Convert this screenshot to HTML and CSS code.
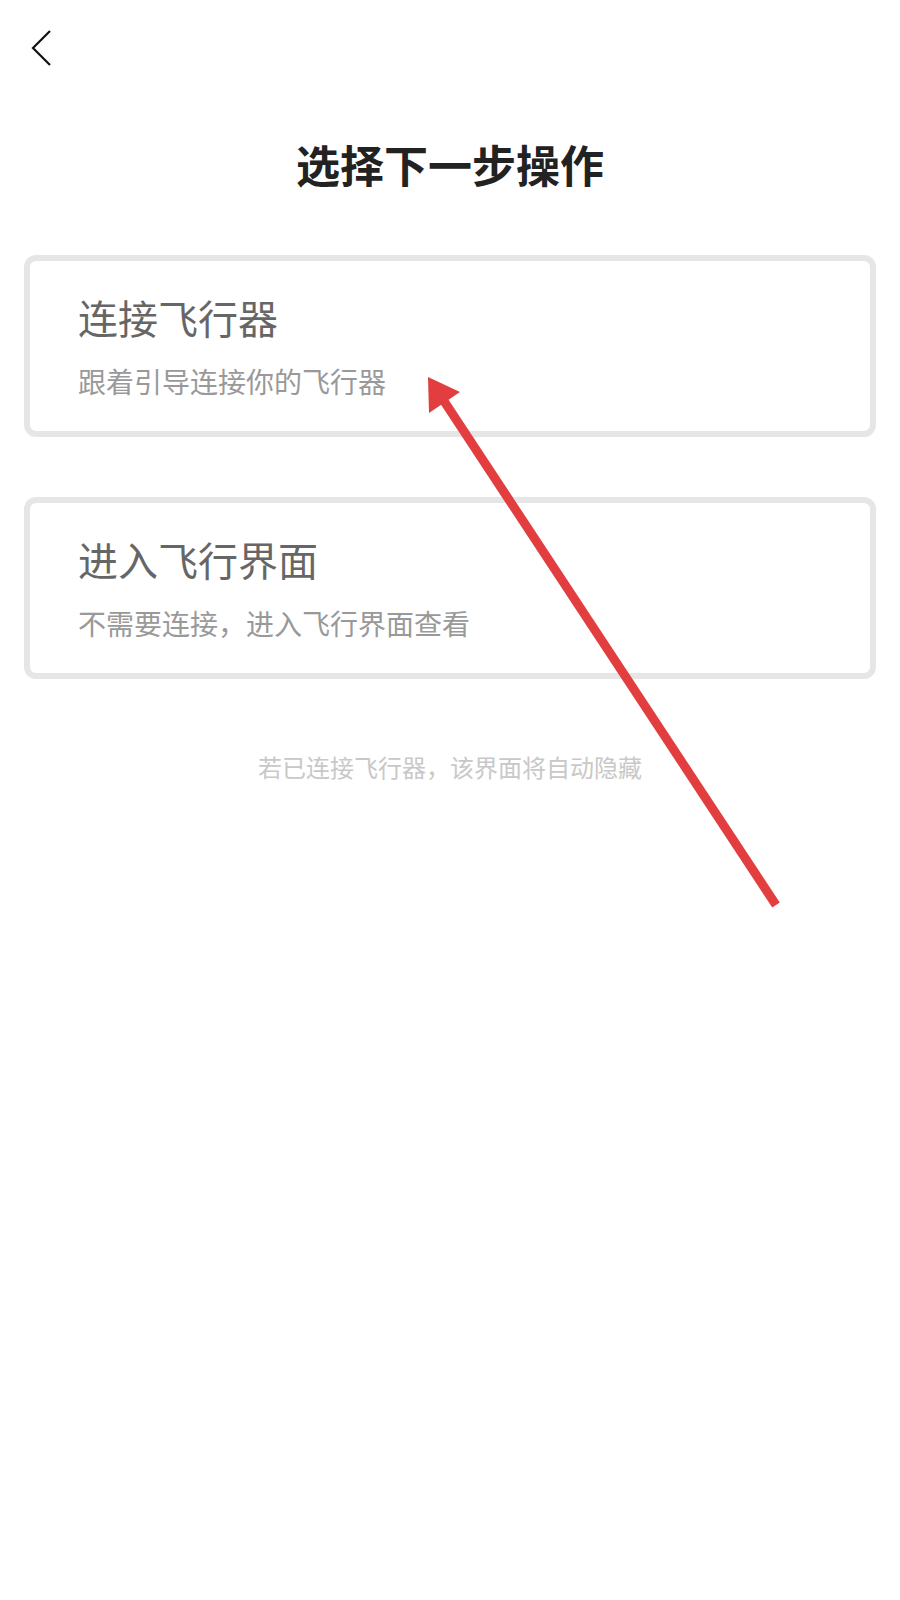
FILE: index.html
```html
<!DOCTYPE html>
<html lang="zh-CN">
<head>
<meta charset="utf-8">
<title>选择下一步操作</title>
<link rel="stylesheet" href="styles.css">
</head>
<body>
<div class="page">
  <div class="topbar">
    <svg class="back" width="24" height="40" viewBox="0 0 24 40" aria-label="返回">
      <polyline points="19,2 2,19 19,36" fill="none" stroke="#111" stroke-width="2.2" stroke-linecap="butt" stroke-linejoin="miter"/>
    </svg>
  </div>
  <h1 class="title">选择下一步操作</h1>
  <div class="cards">
    <div class="card">
      <div class="card-title">连接飞行器</div>
      <div class="card-sub">跟着引导连接你的飞行器</div>
    </div>
    <div class="card">
      <div class="card-title">进入飞行界面</div>
      <div class="card-sub">不需要连接，进入飞行界面查看</div>
    </div>
  </div>
  <p class="hint">若已连接飞行器，该界面将自动隐藏</p>
  <svg class="annotation" width="900" height="1600" viewBox="0 0 900 1600">
    <line x1="442" y1="398" x2="776" y2="905" stroke="#e23e3f" stroke-width="9"/>
    <polygon points="428,377 460,392 429,413" fill="#e23e3f"/>
  </svg>
</div>
</body>
</html>
```
FILE: styles.css
```css
html, body {
  margin: 0;
  padding: 0;
  background: #fff;
}
body {
  font-family: "Noto Sans CJK SC", "Noto Sans", sans-serif;
}
.page {
  position: relative;
  width: 900px;
  min-height: 1600px;
}
.topbar {
  height: 90px;
  box-sizing: border-box;
  padding: 29px 0 0 31px;
}
.back {
  display: block;
}
.title {
  margin: 52px 0 0;
  text-align: center;
  font-size: 44px;
  line-height: 44px;
  font-weight: 700;
  color: #222;
}
.cards {
  margin: 69px 24px 0;
  display: flex;
  flex-direction: column;
  gap: 60px;
}
.card {
  border: 6px solid #e6e6e6;
  border-radius: 12px;
  padding: 36px 48px 35px;
  height: 182px;
  box-sizing: border-box;
}
.card-title {
  font-size: 40px;
  line-height: 40px;
  color: #666;
}
.card-sub {
  margin-top: 30px;
  font-size: 28px;
  line-height: 28px;
  color: #999;
}
.hint {
  margin: 76px 0 0;
  text-align: center;
  font-size: 24px;
  line-height: 24px;
  color: #c8c8c8;
}
.annotation {
  position: absolute;
  left: 0;
  top: 0;
  pointer-events: none;
}
```
